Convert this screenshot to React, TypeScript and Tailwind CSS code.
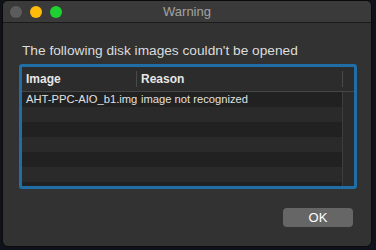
import React from 'react';

const rows = [
  { image: 'AHT-PPC-AIO_b1.img', reason: 'image not recognized' },
  { image: '', reason: '' },
  { image: '', reason: '' },
  { image: '', reason: '' },
  { image: '', reason: '' },
  { image: '', reason: '' },
  { image: '', reason: '' },
];

const App: React.FC = () => {
  return (
    <div
      className="w-[376px] h-[250px] bg-[#0f111b] pl-[2px] pr-[4px] pb-[3px]"
      style={{ fontFamily: '"Liberation Sans", Arial, sans-serif' }}
    >
      <div className="h-full flex flex-col bg-[#323232] border border-[#0a0a0a] rounded-[6px] overflow-hidden">
        {/* Title bar */}
        <div className="relative h-[22px] shrink-0 flex items-center bg-[#3a3a3a] border-b border-[#1b1b1b]">
          <div className="flex items-center gap-[8px] pl-[7px]">
            <span className="w-[12px] h-[12px] rounded-full bg-[#5c5c5c]" />
            <span className="w-[12px] h-[12px] rounded-full bg-[#fdbc09]" />
            <span className="w-[12px] h-[12px] rounded-full bg-[#1fd130]" />
          </div>
          <div className="absolute inset-0 flex items-center justify-center text-[13px] text-[#a3a3a3]">
            Warning
          </div>
        </div>

        {/* Content */}
        <div className="flex-1 flex flex-col pl-[16px] pr-[14px]">
          <p className="mt-[20px] pl-[3px] text-[13.7px] leading-[16px] text-[#dcdcdc] whitespace-nowrap">
            The following disk images couldn't be opened
          </p>

          <div className="mt-[5px] h-[125px] border-[3px] border-[#1f6ea6] rounded-[3px] overflow-hidden flex flex-col bg-[#202020]">
            {/* Header */}
            <div className="h-[25px] shrink-0 flex items-center bg-[#2c2c2c] border-b border-[#454545] text-[12px] font-bold text-[#e6e6e6]">
              <div className="w-[115px] pl-[4px] border-r border-[#4a4a4a] h-[16px] flex items-center whitespace-nowrap">Image</div>
              <div className="flex-1 pl-[4px] h-[16px] flex items-center border-r border-[#4a4a4a] whitespace-nowrap">Reason</div>
              <div className="w-[11px]" />
            </div>
            {/* Rows */}
            <div className="flex-1 flex overflow-hidden">
              <div className="flex-1 flex flex-col">
                {rows.map((row, i) => (
                  <div
                    key={i}
                    className={`h-[15px] shrink-0 flex items-center text-[11.2px] text-[#e0e0e0] whitespace-nowrap ${
                      i % 2 === 0 ? 'bg-[#212121]' : 'bg-[#2a2a2a]'
                    }`}
                  >
                    <div className="w-[115px] pl-[4px] overflow-hidden">{row.image}</div>
                    <div className="flex-1 pl-[4px]">{row.reason}</div>
                  </div>
                ))}
              </div>
              <div className="w-[12px] bg-[#2b2b2b] border-l border-[#3d3d3d]" />
            </div>
          </div>

          <div className="mt-[19px] flex justify-end pr-[4px]">
            <button className="w-[70px] h-[19px] rounded-[4px] bg-[#666666] text-[13px] leading-[19px] text-white">
              OK
            </button>
          </div>
        </div>
      </div>
    </div>
  );
};

export default App;
